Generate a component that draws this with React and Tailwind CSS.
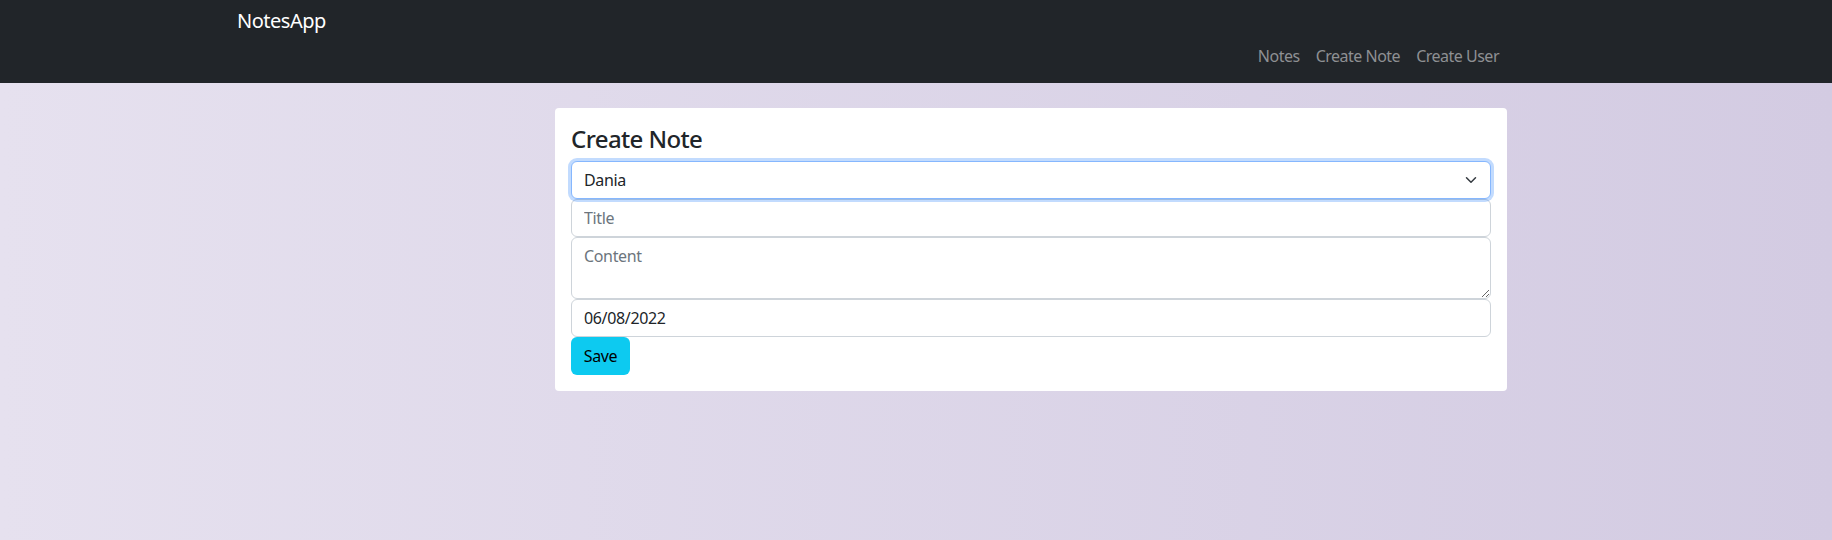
import React from "react";

export default function App() {
  const font = { fontFamily: '"Segoe UI", "Noto Sans", "Open Sans", sans-serif', letterSpacing: "-0.35px" };
  return (
    <div
      className="h-[540px] overflow-hidden w-full bg-[linear-gradient(to_right,#e6e1ef,#d3cbe2)] text-[#212529]"
      style={font}
    >
      <nav className="h-[83px] bg-[#212529] flex flex-col pt-[6px]">
        <div className="pl-[237px] h-[30px] leading-[30px] text-[20px] tracking-[-0.5px] text-white">NotesApp</div>
        <div className="flex justify-end gap-4 pr-[333px] pt-[8px] h-[40px] leading-[24px] text-[16px] tracking-[-0.5px] text-[#8e9093]">
          <a className="cursor-pointer">Notes</a>
          <a className="cursor-pointer">Create Note</a>
          <a className="cursor-pointer">Create User</a>
        </div>
      </nav>
      <div className="pt-[25px] pl-[555px]">
        <div className="w-[952px] bg-white rounded-[4px] p-4">
          <h4 className="text-[24px] leading-[29px] font-medium tracking-[-0.6px] mb-2">Create Note</h4>
          <div className="relative">
            <select
              defaultValue="Dania"
              className="appearance-none block w-full h-[38px] rounded-[6px] border border-[#86b7fe] shadow-[0_0_0_3px_rgba(13,110,253,0.25)] bg-white px-3 text-[16px] text-[#212529] outline-none"
              style={font}
            >
              <option>Dania</option>
            </select>
            <svg
              className="pointer-events-none absolute right-[12px] top-[13px]"
              width="16"
              height="12"
              viewBox="0 0 16 16"
            >
              <path d="m2 5 6 6 6-6" fill="none" stroke="#343a40" strokeWidth="2" strokeLinecap="round" strokeLinejoin="round" />
            </svg>
          </div>
          <input
            placeholder="Title"
            className="block w-full h-[38px] rounded-[6px] border border-[#ced4da] px-3 text-[16px] placeholder:text-[#6c757d] outline-none"
            style={font}
          />
          <textarea
            placeholder="Content"
            rows={2}
            className="block w-full h-[62px] rounded-[6px] border border-[#ced4da] px-3 py-[6px] text-[16px] leading-[24px] placeholder:text-[#6c757d] outline-none resize-y"
            style={font}
          />
          <input
            defaultValue="06/08/2022"
            className="block w-full h-[38px] rounded-[6px] border border-[#ced4da] px-3 text-[16px] text-[#212529] outline-none"
            style={font}
          />
          <button
            className="block h-[38px] w-[59px] rounded-[6px] bg-[#0dcaf0] text-[16px] text-black"
            style={font}
          >
            Save
          </button>
        </div>
      </div>
    </div>
  );
}
